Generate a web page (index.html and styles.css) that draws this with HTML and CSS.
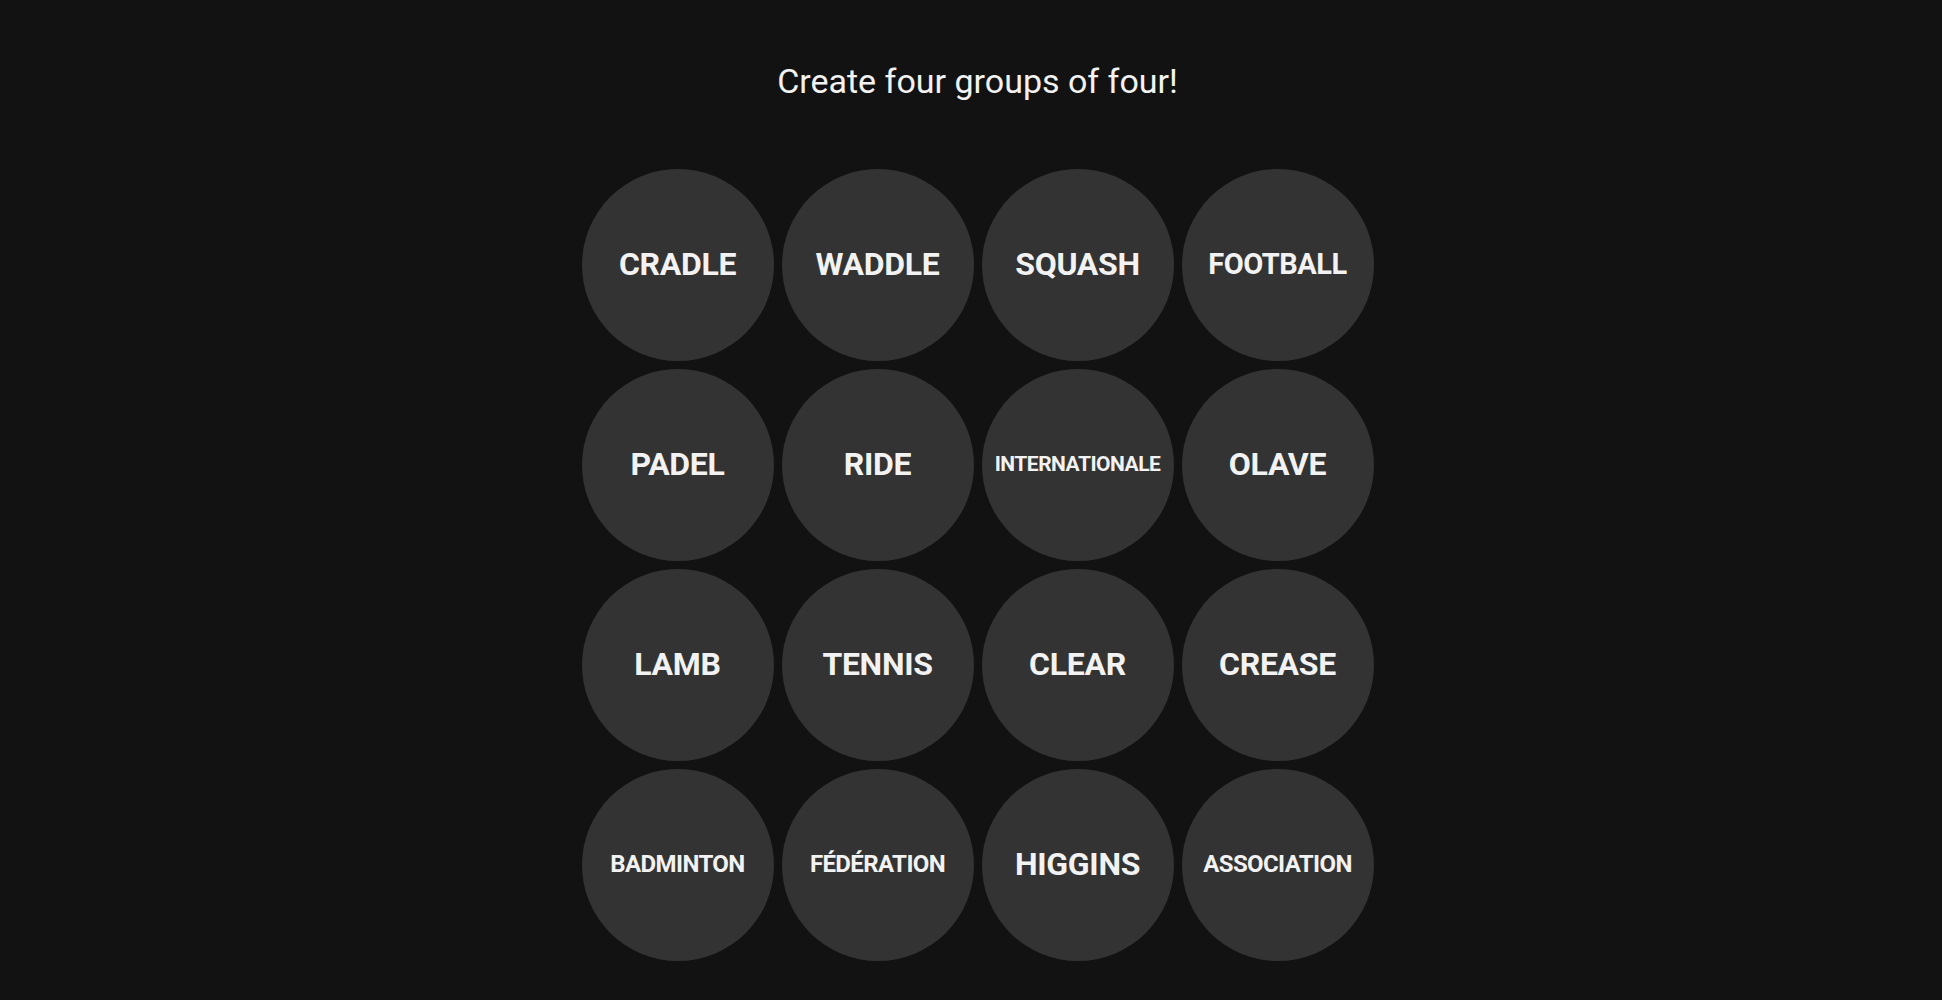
FILE: index.html
```html
<!DOCTYPE html>
<html lang="en">
<head>
    <meta charset="UTF-8">
    <meta name="viewport" content="width=device-width, initial-scale=1.0">
    <title>Connections</title>
    <link rel="stylesheet" href="styles.css">
</head>
<body>
    <main class="game">
        <h2 class="prompt">Create four groups of four!</h2>

        <div class="board">
            <div class="tile">CRADLE</div>
            <div class="tile">WADDLE</div>
            <div class="tile">SQUASH</div>
            <div class="tile tile-md">FOOTBALL</div>

            <div class="tile">PADEL</div>
            <div class="tile">RIDE</div>
            <div class="tile tile-xs">INTERNATIONALE</div>
            <div class="tile">OLAVE</div>

            <div class="tile">LAMB</div>
            <div class="tile">TENNIS</div>
            <div class="tile">CLEAR</div>
            <div class="tile">CREASE</div>

            <div class="tile tile-sm">BADMINTON</div>
            <div class="tile tile-sm">FÉDÉRATION</div>
            <div class="tile">HIGGINS</div>
            <div class="tile tile-sm">ASSOCIATION</div>
        </div>
    </main>
</body>
</html>
```

FILE: styles.css
```css
* {
    margin: 0;
    padding: 0;
    box-sizing: border-box;
}

body {
    background-color: #121212;
    color: #f2f2f2;
    font-family: Roboto, "Liberation Sans", sans-serif;
}

.game {
    display: flex;
    flex-direction: column;
    align-items: center;
    padding: 58px 0 0 13px;
}

.prompt {
    font-size: 34px;
    font-weight: 400;
    line-height: 46px;
    margin-bottom: 65px;
}

.board {
    display: grid;
    grid-template-columns: repeat(4, 192px);
    grid-auto-rows: 192px;
    gap: 8px;
}

.tile {
    display: flex;
    align-items: center;
    justify-content: center;
    border-radius: 50%;
    background-color: #333333;
    font-size: 32px;
    font-weight: 700;
    letter-spacing: -0.3px;
    padding-bottom: 2px;
}

/* longer words get a smaller size so they fit the circle */
.tile-md {
    font-size: 29px;
    letter-spacing: -0.5px;
}

.tile-sm {
    font-size: 24px;
    letter-spacing: -0.6px;
}

.tile-xs {
    font-size: 21px;
    letter-spacing: -0.5px;
}
```
